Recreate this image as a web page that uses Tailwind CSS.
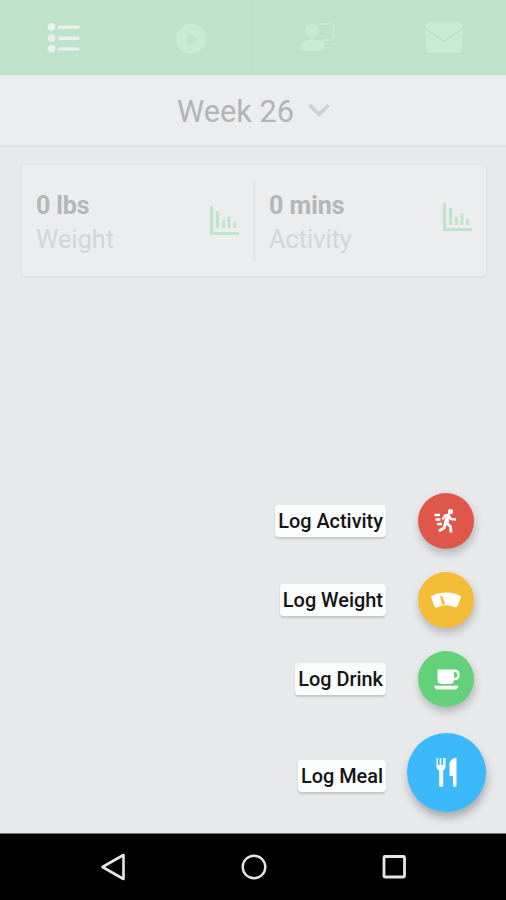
<!DOCTYPE html>
<html lang="en">
<head>
<meta charset="utf-8">
<title>Week 26</title>
<script src="https://cdn.jsdelivr.net/npm/@tailwindcss/browser@4"></script>
</head>
<body class="bg-[#e7e9eb] font-['Roboto',sans-serif]">
<div class="relative flex h-[900px] w-[506px] flex-col overflow-hidden">
  <nav class="grid h-[75px] shrink-0 grid-cols-4 bg-[#bfe3ca] text-[#c8ebd3]">
    <div class="flex items-center justify-center border-r border-[#bce0c8] pl-[2px]">
      <svg class="h-[32px] w-[34px]" viewBox="0 0 34 32" fill="#eaf0ee"><circle cx="4.500" cy="4.900" r="3.800"/><circle cx="4.500" cy="16" r="3.800"/><circle cx="4.500" cy="26.800" r="3.800"/><rect x="11" y="3.400" width="21.500" height="3.400" rx="1.500"/><rect x="11" y="14.500" width="21.500" height="3.400" rx="1.500"/><rect x="11" y="25.200" width="21.500" height="3.400" rx="1.500"/></svg>
    </div>
    <div class="flex items-center justify-center border-r border-[#bce0c8] pl-[4px]">
      <svg class="mt-[2px] h-[30px] w-[30px]" viewBox="0 0 30 30"><circle cx="15" cy="15" r="15" fill="currentColor"/><path d="M11 8.500l11.500 6.500L11 22z" fill="#bfe3ca"/></svg>
    </div>
    <div class="flex items-center justify-center border-r border-[#bde1c9] pl-[4px]">
      <svg class="h-[32px] w-[34px]" viewBox="0 0 34 32"><circle cx="11" cy="9" r="6.700" fill="currentColor"/><path d="M.5 27v-2.500q0-6.500 7-6.500h9q7 0 7 5-1.500 6-6 6h-15q-2 0-2-2z" fill="currentColor"/><path d="M18 2h12q2.500 0 2.500 2.500v10q0 3.500-3.500 3.500h-8" fill="none" stroke="currentColor" stroke-width="1.800"/></svg>
    </div>
    <div class="flex items-center justify-center pl-[2px]">
      <svg class="h-[31px] w-[36px]" viewBox="0 0 36 31"><rect width="36" height="31" rx="3" fill="currentColor"/><path d="M0 7l18 12L36 7" fill="none" stroke="#bbdfc7" stroke-width="1.500"/></svg>
    </div>
  </nav>
  <header class="flex h-[72px] shrink-0 items-center border-b-2 border-[#dddfe1] bg-[#ebedef] pl-[177px]">
    <h1 class="pt-[3px] text-[30.700px] leading-[36px] whitespace-nowrap text-[#b2b5b7]">Week 26</h1>
    <svg class="ml-[14px] h-[16px] w-[22px]" viewBox="0 0 22 16" fill="none" stroke="#ced2d4" stroke-width="3.800"><path d="M1.500 3L11 12.300 20.500 3"/></svg>
  </header>
  <main class="flex-1 px-[22px] pt-[18px] pr-[20px]">
    <section class="flex h-[111px] rounded-[3px] bg-[#ebedee] shadow-[0_1px_2px_1px_#dddfe1]">
      <div class="flex w-[231px] justify-between pl-[14px] pr-[14px]">
        <div class="pt-[24px]">
          <p class="text-[25px] leading-[34px] font-bold tracking-[-0.1px] text-[#b4b6b7]">0 lbs</p>
          <p class="text-[25.300px] leading-[34px] text-[#d3d6d8]">Weight</p>
        </div>
        <svg class="mt-[41px] h-[30px] w-[29px]" viewBox="0 0 29 30" fill="#bfe5ca"><path d="M0 0h3v26h26v3H0z"/><path d="M6 5h3.200v17H6zM12 14h3v8h-3zM17.500 10.500h3V22h-3zM23 16h3v6h-3z"/></svg>
      </div>
      <div class="my-[15px] w-[3px] bg-[#e4e7e8]"></div>
      <div class="flex flex-1 justify-between pl-[13px] pr-[14px]">
        <div class="pt-[24px]">
          <p class="text-[25px] leading-[34px] font-bold text-[#b4b6b7]">0 mins</p>
          <p class="text-[25.300px] leading-[34px] text-[#d3d6d8]">Activity</p>
        </div>
        <svg class="mt-[38px] h-[30px] w-[29px]" viewBox="0 0 29 30" fill="#bfe5ca"><path d="M0 0h3v25h26v3H0z"/><path d="M6 5h3.200v17H6zM12 14h3v8h-3zM17.500 10.500h3V22h-3zM23 16h3v6h-3z"/></svg>
      </div>
    </section>
  </main>

  <div class="absolute top-[493px] right-[20px] flex flex-col items-end whitespace-nowrap text-[19.900px] font-medium text-[#151515]">
    <div class="mb-[23px] flex items-center gap-[21px]">
      <span class="rounded-[4px] bg-[#fbfcfc] px-[3px] pt-[2px] leading-[30px] shadow-[0_2px_2px_#c5c7c9]">Log Activity</span>
      <div class="flex w-[79px] justify-center pr-[2px]">
        <div class="flex h-[56px] w-[56px] items-center justify-center rounded-full bg-[#df574a] shadow-[1px_5px_8px_#00000038]">
          <svg class="h-[26px] w-[24px]" viewBox="0 0 24 26" fill="none" stroke="#fff" stroke-linejoin="round"><circle cx="16.500" cy="3.700" r="2.600" fill="#fff" stroke="none"/><path d="M8.500 11.500l2.500-4 3.500-.5 2.500 4 5 .5" stroke-width="2.300"/><path d="M14 8l-2 7.500" stroke-width="4.600"/><path d="M12.500 15l4 3.500.5 6M11.500 15L10 20l-5 3" stroke-width="2.900"/><path d="M.5 7H6M1.500 11.500h5M3 16h5" stroke-width="2.500"/></svg>
        </div>
      </div>
    </div>
    <div class="mb-[23px] flex items-center gap-[21px]">
      <span class="rounded-[4px] bg-[#fbfcfc] px-[3px] pt-[2px] leading-[30px] shadow-[0_2px_2px_#c5c7c9]">Log Weight</span>
      <div class="flex w-[79px] justify-center pr-[2px]">
        <div class="flex h-[56px] w-[56px] items-center justify-center rounded-full bg-[#f4bd38] shadow-[1px_5px_8px_#00000038]">
          <svg class="h-[16px] w-[32px]" viewBox="0 0 32 16"><path d="M.8 4.500Q7 .5 16 .5T31.200 4.500L27.500 14q-1 2-3 1Q16 11.500 7.500 15.200q-2 .8-3-1z" fill="#fff"/><path d="M10.200 4l1.600-.2 3 6.700q.3 2.500-1.500 2.500t-1.800-2z" fill="#f4bd38"/></svg>
        </div>
      </div>
    </div>
    <div class="mb-[26px] flex items-center gap-[21px]">
      <span class="rounded-[4px] bg-[#fbfcfc] px-[3px] pt-[2px] leading-[30px] shadow-[0_2px_2px_#c5c7c9]">Log Drink</span>
      <div class="flex w-[79px] justify-center pr-[2px]">
        <div class="flex h-[56px] w-[56px] items-center justify-center rounded-full bg-[#63d17a] shadow-[1px_5px_8px_#00000038]">
          <svg class="ml-[2px] h-[21px] w-[26px]" viewBox="0 0 26 21"><path d="M3.500.5H20v10q0 4.500-4.500 4.500H8q-4.500 0-4.500-4.500z" fill="#fff"/><path d="M19 1.700h1.500q4 0 4 4.200t-4 4.200H19" fill="none" stroke="#fff" stroke-width="2.400"/><path d="M0 16.800h24.500q-1 3.700-3.500 3.700H3.500Q1 20.500 0 16.800z" fill="#fff"/></svg>
        </div>
      </div>
    </div>
    <div class="flex items-center gap-[21px]">
      <span class="mt-[6px] rounded-[4px] bg-[#fbfcfc] px-[3px] pt-[2px] leading-[30px] shadow-[0_2px_2px_#c5c7c9]">Log Meal</span>
      <div class="flex h-[79px] w-[79px] items-center justify-center rounded-full bg-[#3cb9fb] shadow-[1px_6px_9px_#00000044]">
        <svg class="h-[31px] w-[22px]" viewBox="0 0 22 31" fill="#fff"><path d="M.5 1h1.400v7h1.800V1h1.600v7h1.800V1H9.500v9q0 2.500-2.300 3.500V28.500q0 1.500-2 1.500t-2-1.500V13.500Q.5 12.500.5 10z"/><path d="M20.500.5V28.500q0 1.500-1.700 1.500T17 28.500V19h-3.500V7q0-5 7-6.500z"/></svg>
      </div>
    </div>
  </div>

  <footer class="flex h-[67px] shrink-0 items-center justify-between border-t border-[#777] bg-black pr-[99px] pl-[100px]">
    <svg class="h-[28px] w-[26px]" viewBox="0 0 26 28" fill="none" stroke="#e6e6e6" stroke-width="2.600" stroke-linejoin="round"><path d="M23.500 2v24L2.500 14z"/></svg>
    <svg class="h-[28px] w-[28px]" viewBox="0 0 28 28" fill="none" stroke="#e6e6e6" stroke-width="2.400"><circle cx="14" cy="14" r="11.300"/></svg>
    <svg class="h-[28px] w-[26px]" viewBox="0 0 26 28" fill="none" stroke="#e6e6e6" stroke-width="2.800"><rect x="3" y="3.500" width="20.500" height="20.500" rx="1"/></svg>
  </footer>
</div>
</body>
</html>
